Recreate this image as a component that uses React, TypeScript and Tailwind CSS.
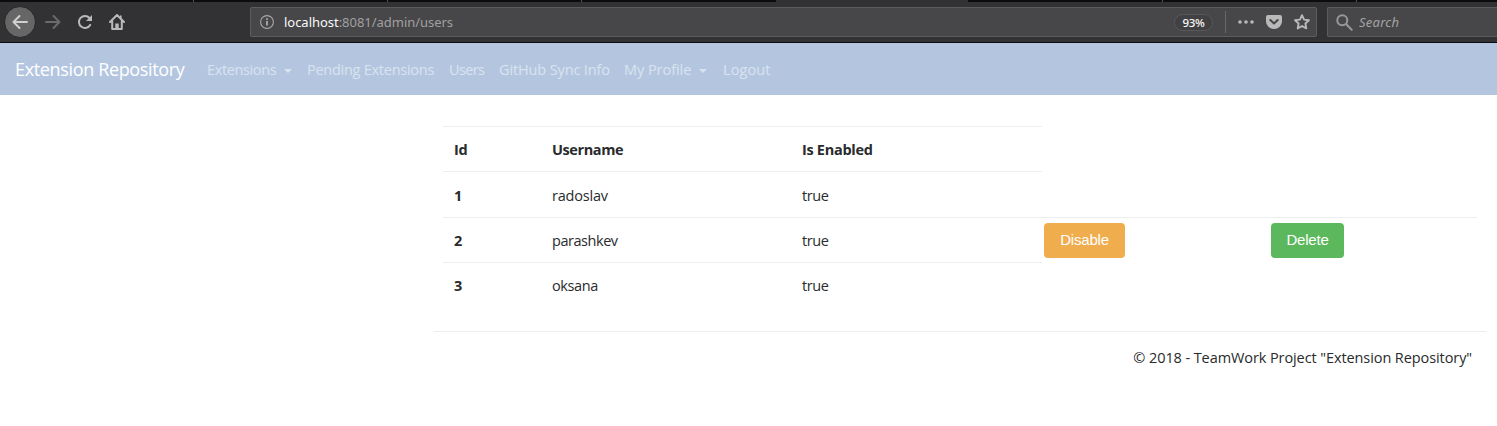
import React from "react";

const tabs = [
  "w-[194px] border-r bg-[#0c0c0d]",
  "w-[194px] border-r bg-[#0c0c0d]",
  "w-[194px] border-r bg-[#0c0c0d]",
  "w-[194px] bg-[#0c0c0d]",
  "w-[192px] bg-[#323234]",
  "w-[195px] border-r bg-[#0c0c0d]",
  "w-[194px] border-r bg-[#0c0c0d]",
  "flex-1 bg-[#0c0c0d]",
];

function Caret() {
  return <span className="ml-2 mt-[3px] h-0 w-0 border-x-4 border-t-4 border-x-transparent border-t-current" />;
}

function BrowserBar() {
  return (
    <header className="h-[43px] border-b border-[#0c0c0d] bg-[#323234] text-[#b9b9ba]">
      <div className="flex h-[2px]">
        {tabs.map((t, i) => (
          <div key={i} className={`${t} border-[#555]`} />
        ))}
      </div>
      <div className="flex h-10 items-center">
        <div className="ml-1 flex h-8 w-8 items-center justify-center rounded-full border border-[#262628] bg-[#666667]">
          <svg width="16" height="16" viewBox="0 0 16 16" fill="none" stroke="#d0d0d1" strokeWidth="2" strokeLinecap="round" strokeLinejoin="round">
            <path d="M15 8H1.5M7.5 2L1.5 8l6 6" />
          </svg>
        </div>
        <svg className="ml-[9px]" width="16" height="16" viewBox="0 0 16 16" fill="none" stroke="#6b6b6c" strokeWidth="2" strokeLinecap="round" strokeLinejoin="round">
          <path d="M1 8h13.5M8.5 2l6 6-6 6" />
        </svg>
        <svg className="ml-4" width="16" height="16" viewBox="0 0 16 16" fill="none" stroke="currentColor" strokeWidth="2">
          <path d="M13.2 10.9A6 6 0 1 1 12.5 4" strokeLinecap="round" />
          <path d="M15 1v6H9z" fill="currentColor" stroke="none" />
        </svg>
        <svg className="ml-4" width="16" height="16" viewBox="0 0 16 16" fill="none" stroke="currentColor" strokeWidth="2" strokeLinecap="round" strokeLinejoin="round">
          <path d="M1 8l7-7 7 7M3.2 7v8h9.6V7" />
          <path d="M6.3 9.5h3.4V15H6.3z" fill="currentColor" stroke="none" />
          <path d="M11.8 2v3" strokeWidth="1.6" />
        </svg>
        <div className="ml-[125px] flex h-[30px] w-[1067px] shrink-0 items-center rounded-[2px] border border-[#5c5c5e] bg-[#474749]">
          <svg className="ml-[9px]" width="14" height="14" viewBox="0 0 14 14" fill="none" stroke="#a9a9aa">
            <circle cx="7" cy="7" r="6.4" strokeWidth="1.1" />
            <path d="M7 6v4.6M7 3.2v1.7" strokeWidth="1.8" />
          </svg>
          <span className="ml-[10px] pt-[2px] font-['Noto_Sans',sans-serif] text-[13px] tracking-[-0.03px] text-[#a0a0a1]">
            <span className="text-[#f9f9fa]">localhost</span>:8081/admin/users
          </span>
          <span className="ml-auto flex h-[17px] w-[39px] items-center justify-center rounded-full border border-[#58585a] bg-[#414143] pt-px font-['Noto_Sans',sans-serif] text-[11.5px] font-medium tracking-[-0.4px] text-[#f9f9fa]">93%</span>
          <span className="ml-3 h-[22px] w-px bg-[#68686a]" />
          <svg className="ml-3" width="16" height="16" viewBox="0 0 16 16" fill="currentColor">
            <circle cx="2" cy="8" r="1.8" /><circle cx="8" cy="8" r="1.8" /><circle cx="14" cy="8" r="1.8" />
          </svg>
          <svg className="ml-3" width="16" height="16" viewBox="0 0 16 16">
            <path d="M2 1h12a2 2 0 0 1 2 2v4.5a8 7.5 0 0 1-16 0V3a2 2 0 0 1 2-2z" fill="currentColor" />
            <path d="M4.3 6L8 9.5 11.7 6" fill="none" stroke="#474749" strokeWidth="2" strokeLinecap="round" strokeLinejoin="round" />
          </svg>
          <svg className="ml-3 mr-[6px]" width="16" height="16" viewBox="0 0 16 16" fill="none" stroke="currentColor" strokeWidth="1.9" strokeLinejoin="round">
            <path d="M8 1.2l2.1 4.4 4.8.6-3.5 3.3.9 4.9L8 12l-4.3 2.4.9-4.9L1.1 6.2l4.8-.6z" />
          </svg>
        </div>
        <div className="ml-[10px] flex h-[30px] flex-1 items-center rounded-l-[2px] border border-r-0 border-[#5c5c5e] bg-[#474749]">
          <svg className="ml-2" width="17" height="17" viewBox="0 0 17 17" fill="none" stroke="#98989a" strokeWidth="2" strokeLinecap="round">
            <circle cx="6.3" cy="6.3" r="5" /><path d="M10 10l5.7 5.7" />
          </svg>
          <span className="ml-[6px] pt-[2px] font-['Noto_Sans',sans-serif] text-[13px] italic tracking-[0.25px] text-[#a4a4a5]">Search</span>
        </div>
      </div>
    </header>
  );
}

function NavBar() {
  return (
    <nav className="flex h-[52px] items-center bg-[#b4c6df] pl-[15px] pt-px text-[14.5px] text-[#d9e3f0]">
      <a className="w-[192px] whitespace-nowrap text-[18px] tracking-[-0.35px] text-white">Extension Repository</a>
      <a className="flex w-[100px] items-center whitespace-nowrap tracking-[-0.37px]">Extensions<Caret /></a>
      <a className="w-[142px] whitespace-nowrap tracking-[-0.26px]">Pending Extensions</a>
      <a className="w-[50px] whitespace-nowrap tracking-[-0.65px]">Users</a>
      <a className="w-[125px] whitespace-nowrap tracking-[-0.13px]">GitHub Sync Info</a>
      <a className="flex w-[99px] items-center whitespace-nowrap tracking-[-0.05px]">My Profile<Caret /></a>
      <a className="whitespace-nowrap tracking-[0.1px]">Logout</a>
    </nav>
  );
}

const users = [
  { id: 1, name: "radoslav", row: "h-[46px] w-[599px] pt-[3px]", nameTracking: "tracking-[-0.2px]" },
  { id: 2, name: "parashkev", row: "h-[45px] w-[1034px] pt-[2px]", nameTracking: "tracking-[-0.45px]", actions: true },
  { id: 3, name: "oksana", row: "h-[45px] w-[599px] pt-[2px]", nameTracking: "tracking-[-0.4px]" },
];

export default function App() {
  return (
    <div className="h-[426px] overflow-hidden bg-white font-['Open_Sans','Noto_Sans',sans-serif] text-[14.5px] text-[#292b2c]">
      <BrowserBar />
      <NavBar />
      <main className="ml-[434px] mt-[31px] w-[1052px]">
        <section className="ml-[9px] h-[205px]">
          <div className="flex h-[45px] w-[599px] items-center border-t border-[#eceeef] pl-[11px] pt-px font-bold tracking-[-0.3px]">
            <span className="w-[98px]">Id</span>
            <span className="w-[250px] tracking-[-0.4px]">Username</span>
            <span>Is Enabled</span>
          </div>
          {users.map((u) => (
            <div key={u.id} className={`flex items-center border-t border-[#eceeef] pl-[11px] ${u.row}`}>
              <span className="w-[98px] shrink-0 font-bold">{u.id}</span>
              <span className={`w-[250px] shrink-0 ${u.nameTracking}`}>{u.name}</span>
              <span className="w-[242px] tracking-[-0.45px]">true</span>
              {u.actions && (
                <>
                  <span className="w-[227px]">
                    <button className="-mt-px block h-[35px] w-[81px] rounded-[4px] bg-[#f0ad4e] font-['Liberation_Sans',Arial,sans-serif] text-[15px] tracking-[-0.2px] text-white">Disable</button>
                  </span>
                  <button className="-mt-px h-[35px] w-[73px] rounded-[4px] bg-[#5cb85c] font-['Liberation_Sans',Arial,sans-serif] text-[15px] tracking-[-0.2px] text-white">Delete</button>
                </>
              )}
            </div>
          ))}
        </section>
        <footer className="border-t border-[#eceeef] pr-[14px] pt-[15px] text-right tracking-[-0.09px]">
          © 2018 - TeamWork Project "Extension Repository"
        </footer>
      </main>
    </div>
  );
}
